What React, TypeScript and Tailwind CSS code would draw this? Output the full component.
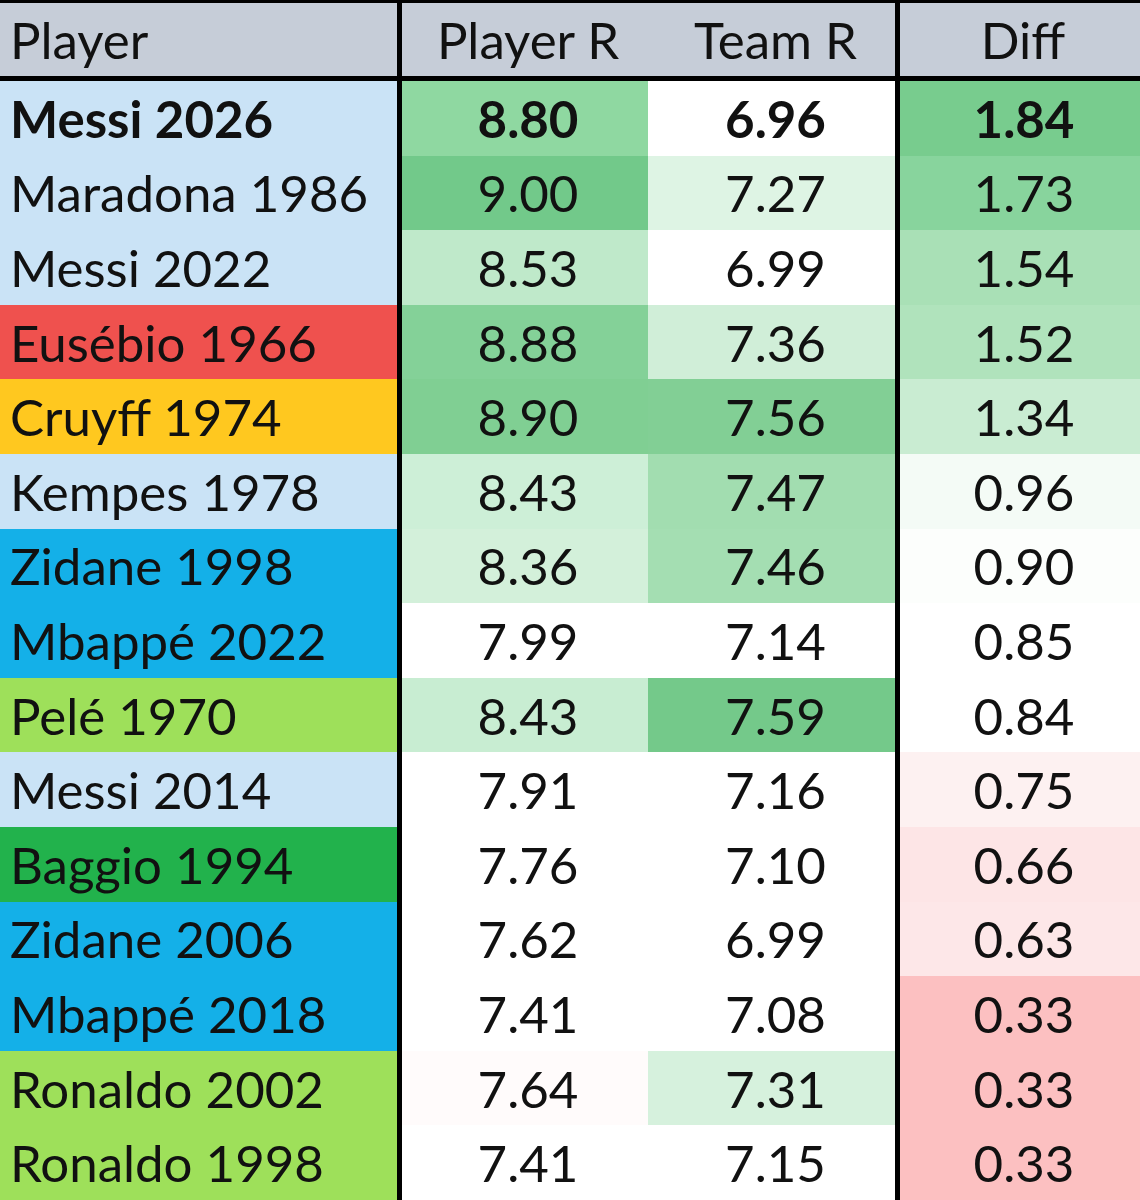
import React from "react";

type Row = {
  name: string;
  nameBg: string;
  pr: string;
  prBg: string;
  tr: string;
  trBg: string;
  diff: string;
  diffBg: string;
  bold?: boolean;
};

const rows: Row[] = [
  { name: "Messi 2026", nameBg: "bg-[#cae3f6]", pr: "8.80", prBg: "bg-[#8fd8a1]", tr: "6.96", trBg: "bg-white", diff: "1.84", diffBg: "bg-[#78cc8e]", bold: true },
  { name: "Maradona 1986", nameBg: "bg-[#cae3f6]", pr: "9.00", prBg: "bg-[#72c98a]", tr: "7.27", trBg: "bg-[#def4e4]", diff: "1.73", diffBg: "bg-[#88d49d]" },
  { name: "Messi 2022", nameBg: "bg-[#cae3f6]", pr: "8.53", prBg: "bg-[#bfe9ca]", tr: "6.99", trBg: "bg-white", diff: "1.54", diffBg: "bg-[#a9e0b6]" },
  { name: "Eusébio 1966", nameBg: "bg-[#ef514e]", pr: "8.88", prBg: "bg-[#84d198]", tr: "7.36", trBg: "bg-[#d0eed8]", diff: "1.52", diffBg: "bg-[#b0e3bc]" },
  { name: "Cruyff 1974", nameBg: "bg-[#ffc81f]", pr: "8.90", prBg: "bg-[#80cf93]", tr: "7.56", trBg: "bg-[#82cf95]", diff: "1.34", diffBg: "bg-[#c9ecd2]" },
  { name: "Kempes 1978", nameBg: "bg-[#cae3f6]", pr: "8.43", prBg: "bg-[#cdefd7]", tr: "7.47", trBg: "bg-[#a2ddb0]", diff: "0.96", diffBg: "bg-[#f4fbf6]" },
  { name: "Zidane 1998", nameBg: "bg-[#14b0e8]", pr: "8.36", prBg: "bg-[#d3f0da]", tr: "7.46", trBg: "bg-[#a4deb2]", diff: "0.90", diffBg: "bg-[#fcfefc]" },
  { name: "Mbappé 2022", nameBg: "bg-[#14b0e8]", pr: "7.99", prBg: "bg-white", tr: "7.14", trBg: "bg-white", diff: "0.85", diffBg: "bg-white" },
  { name: "Pelé 1970", nameBg: "bg-[#9ee05a]", pr: "8.43", prBg: "bg-[#c8edd2]", tr: "7.59", trBg: "bg-[#74c98a]", diff: "0.84", diffBg: "bg-white" },
  { name: "Messi 2014", nameBg: "bg-[#cae3f6]", pr: "7.91", prBg: "bg-white", tr: "7.16", trBg: "bg-white", diff: "0.75", diffBg: "bg-[#fdf1f1]" },
  { name: "Baggio 1994", nameBg: "bg-[#22b24c]", pr: "7.76", prBg: "bg-white", tr: "7.10", trBg: "bg-white", diff: "0.66", diffBg: "bg-[#fde5e6]" },
  { name: "Zidane 2006", nameBg: "bg-[#14b0e8]", pr: "7.62", prBg: "bg-white", tr: "6.99", trBg: "bg-white", diff: "0.63", diffBg: "bg-[#fde7e8]" },
  { name: "Mbappé 2018", nameBg: "bg-[#14b0e8]", pr: "7.41", prBg: "bg-white", tr: "7.08", trBg: "bg-white", diff: "0.33", diffBg: "bg-[#fcc0c1]" },
  { name: "Ronaldo 2002", nameBg: "bg-[#9ee05a]", pr: "7.64", prBg: "bg-[#fffbfb]", tr: "7.31", trBg: "bg-[#d6f1dd]", diff: "0.33", diffBg: "bg-[#fcc0c1]" },
  { name: "Ronaldo 1998", nameBg: "bg-[#9ee05a]", pr: "7.41", prBg: "bg-white", tr: "7.15", trBg: "bg-white", diff: "0.33", diffBg: "bg-[#fcc0c1]" },
];

export default function App() {
  return (
    <div className="w-[1140px] h-[1200px] overflow-hidden bg-white text-[#111] font-['Lato',sans-serif] text-[51px] leading-none">
      {/* header */}
      <div className="flex h-[81px] bg-[#c6cdd8] border-t-[3px] border-b-[5px] border-black">
        <div className="w-[397px] flex items-center pl-[10px]">Player</div>
        <div className="w-[251px] flex items-center justify-center pl-[6px] border-l-[5px] border-black">Player R</div>
        <div className="w-[247px] flex items-center justify-center pl-[8px]">Team R</div>
        <div className="flex-1 flex items-center justify-center pl-[6px] border-l-[5px] border-black">Diff</div>
      </div>

      {rows.map((r) => (
        <div key={r.name} className={`flex h-[74.6px] ${r.bold ? "font-bold" : ""}`}>
          <div className={`w-[397px] flex items-center pl-[10px] ${r.nameBg}`}>{r.name}</div>
          <div className={`w-[251px] flex items-center justify-center pl-[6px] border-l-[5px] border-black ${r.prBg}`}>{r.pr}</div>
          <div className={`w-[247px] flex items-center justify-center pl-[8px] ${r.trBg}`}>{r.tr}</div>
          <div className={`flex-1 flex items-center justify-center pl-[8px] border-l-[5px] border-black ${r.diffBg}`}>{r.diff}</div>
        </div>
      ))}
    </div>
  );
}
